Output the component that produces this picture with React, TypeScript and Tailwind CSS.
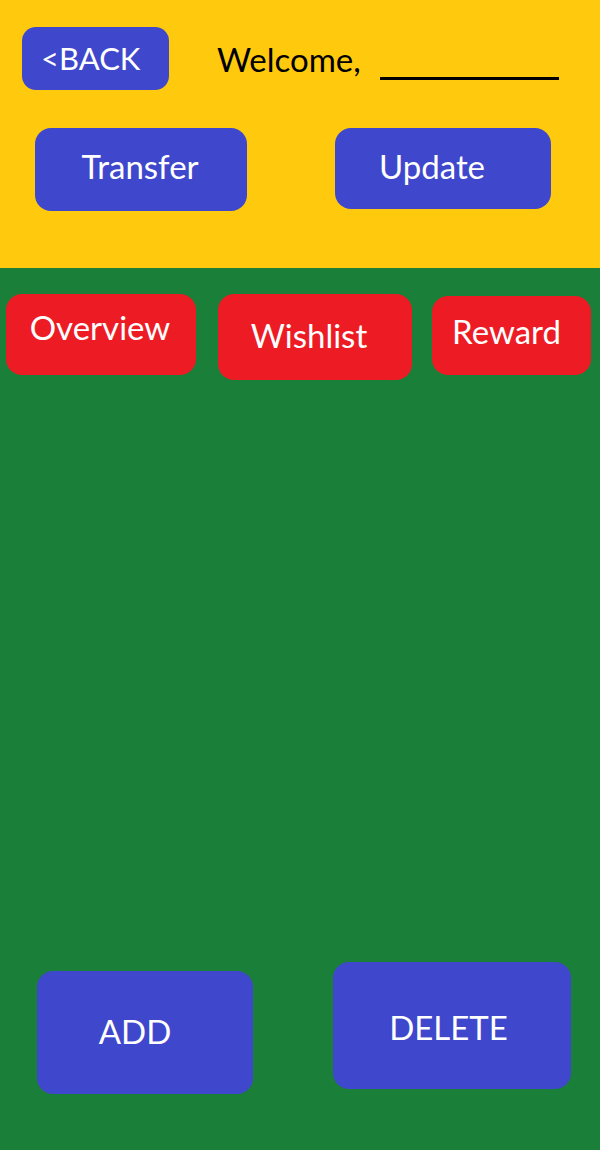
import React from 'react';

export default function App() {
  return (
    <div className="w-[600px] h-[1150px] flex flex-col bg-[#1a7f38] text-white text-[33px] leading-none font-[Lato,sans-serif] overflow-hidden">
      {/* header */}
      <div className="h-[268px] shrink-0 bg-[#ffc90e] flex flex-col">
        <div className="flex items-start pt-[27px]">
          <button className="ml-[22px] w-[147px] h-[63px] rounded-[14px] bg-[#3f48cc] flex items-center pl-[19px] text-white text-[31px]">
            &lt;BACK
          </button>
          <div className="ml-[48px] mt-[16px] flex items-end text-black text-[33px]">
            <span>Welcome,</span>
            <span className="ml-[19px] mb-[-4px] w-[179px] h-[3px] bg-black" />
          </div>
        </div>
        <div className="flex items-start mt-[38px]">
          <button className="ml-[35px] w-[212px] h-[83px] rounded-[16px] bg-[#3f48cc] flex items-center justify-center pr-[2px] pb-[6px] text-white">
            Transfer
          </button>
          <button className="ml-[88px] w-[216px] h-[81px] rounded-[16px] bg-[#3f48cc] flex items-center justify-center pr-[22px] pb-[4px] text-white">
            Update
          </button>
        </div>
      </div>

      {/* tabs */}
      <div className="flex items-start pt-[26px]">
        <button className="ml-[6px] w-[190px] h-[81px] rounded-[16px] bg-[#ed1c24] flex justify-center pt-[17px] pr-[2px] text-white">
          Overview
        </button>
        <button className="ml-[22px] w-[194px] h-[86px] rounded-[16px] bg-[#ed1c24] flex items-center justify-center pr-[12px] pb-[4px] text-white">
          Wishlist
        </button>
        <button className="ml-[20px] mt-[2px] w-[159px] h-[79px] rounded-[16px] bg-[#ed1c24] flex items-center justify-center pr-[10px] pb-[8px] text-white">
          Reward
        </button>
      </div>

      <div className="flex-1" />

      {/* bottom actions */}
      <div className="flex items-start pb-[56px]">
        <button className="ml-[37px] mt-[9px] w-[216px] h-[123px] rounded-[16px] bg-[#3f48cc] flex items-center justify-center pr-[20px] pb-[2px] text-white">
          ADD
        </button>
        <button className="ml-[80px] w-[238px] h-[127px] rounded-[16px] bg-[#3f48cc] flex items-center justify-center pr-[7px] pt-[4px] text-white">
          DELETE
        </button>
      </div>
    </div>
  );
}
